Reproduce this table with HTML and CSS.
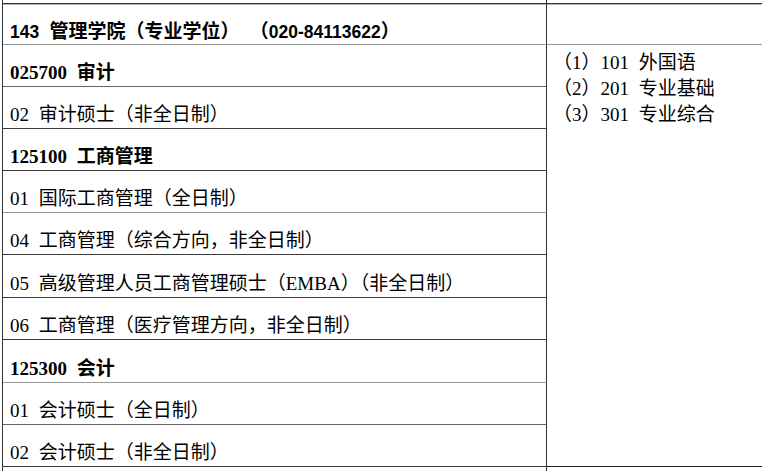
FILE: index.html
```html
<!DOCTYPE html>
<html lang="zh-CN">
<head>
<meta charset="utf-8">
<title>管理学院</title>
<link rel="stylesheet" href="styles.css">
</head>
<body>
<div class="sheet">
  <div class="side strip-r"></div>
  <div class="side head-r"></div>
  <div class="side exams">
    <div class="exam">（1）101 外国语</div>
    <div class="exam">（2）201 专业基础</div>
    <div class="exam">（3）301 专业综合</div>
  </div>
  <div class="side tail-r"></div>

  <div class="cell strip"></div>
  <div class="cell head"><span class="txt"><span class="n">143</span> 管理学院（专业学位） （<span class="n">020-84113622</span>）</span></div>
  <div class="cell cat line-mid"><span class="txt">025700 审计</span></div>
  <div class="cell"><span class="txt">02 审计硕士（非全日制）</span></div>
  <div class="cell cat"><span class="txt">125100 工商管理</span></div>
  <div class="cell line-gray"><span class="txt">01 国际工商管理（全日制）</span></div>
  <div class="cell"><span class="txt">04 工商管理（综合方向，非全日制）</span></div>
  <div class="cell"><span class="txt">05 高级管理人员工商管理硕士（EMBA）（非全日制）</span></div>
  <div class="cell"><span class="txt">06 工商管理（医疗管理方向，非全日制）</span></div>
  <div class="cell cat line-gray"><span class="txt">125300 会计</span></div>
  <div class="cell line-mid"><span class="txt">01 会计硕士（全日制）</span></div>
  <div class="cell"><span class="txt">02 会计硕士（非全日制）</span></div>
  <div class="cell tail"></div>
</div>
</body>
</html>
```

FILE: styles.css
```css
html, body {
  margin: 0;
  padding: 0;
  background: #fff;
}

body {
  width: 762px;
  height: 471px;
  overflow: hidden;
  font-family: "Liberation Serif", "Noto Sans CJK SC", serif;
  font-size: 19px;
  color: #000;
}

.sheet {
  display: grid;
  grid-template-columns: 544px 1fr;
  grid-template-rows: 3px 42px 42px 42px 42px 42px 42px 43px 42px 43px 42px 42px 1fr;
  height: 471px;
  margin-left: 2px;
  border-left: 1px solid #333;
}

.cell {
  grid-column: 1;
  box-sizing: border-box;
  border-right: 1px solid #2e2e2e;
  border-bottom: 1px solid #3c3c3c;
  display: flex;
  align-items: center;
  padding: 10px 0 0 7px;
  white-space: nowrap;
  word-spacing: 5px;
}

.cell.strip,
.cell.tail {
  border-bottom: none;
  padding: 0;
}

.cell.head,
.side.head-r {
  border-top: 1px solid #333;
  box-shadow: inset 0 1px 0 #b4b4b4;
  border-bottom: 1px solid #9a9a9a;
}

.cell.head {
  font-family: "Liberation Sans", "Noto Sans CJK SC", sans-serif;
  font-weight: bold;
  padding-top: 11px;
}

.head .n {
  font-size: 17.5px;
}

.cat {
  font-weight: bold;
}

.line-mid {
  border-bottom-color: #666;
}

.line-gray {
  border-bottom-color: #9a9a9a;
}

.side {
  grid-column: 2;
  box-sizing: border-box;
}

.strip-r { grid-row: 1; }
.head-r { grid-row: 2; }

.exams {
  grid-row: 3 / 13;
  border-bottom: 1px solid #222;
  padding: 5px 0 0 6px;
  line-height: 26px;
  white-space: nowrap;
  word-spacing: 5px;
}

.tail-r { grid-row: 13; }
```
